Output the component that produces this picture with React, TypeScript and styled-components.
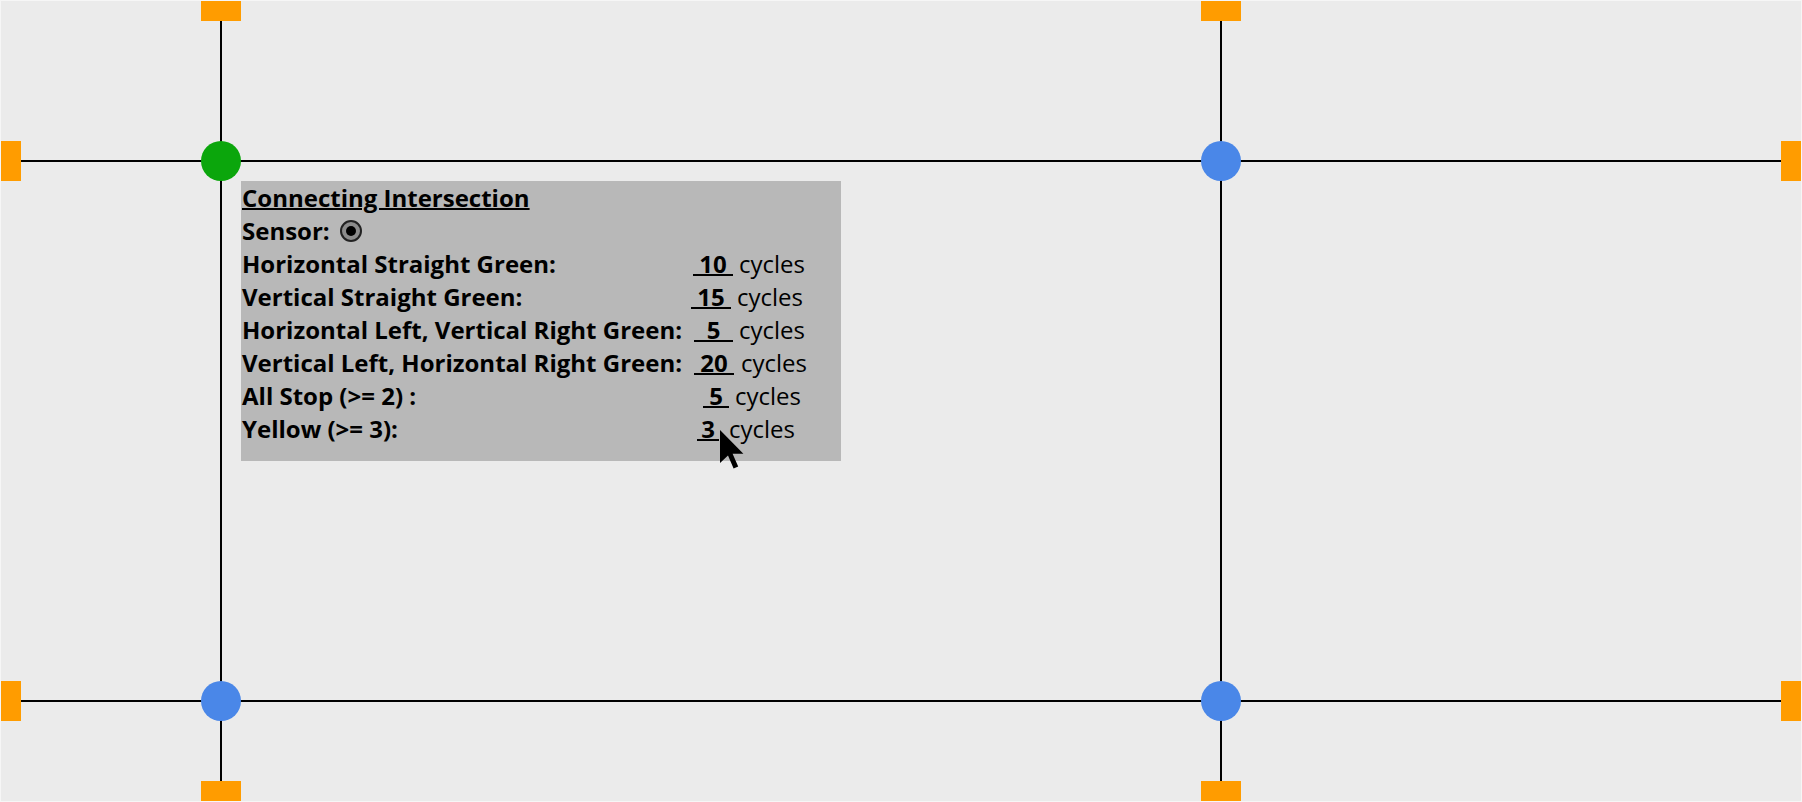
import React from "react";
import styled, { createGlobalStyle } from "styled-components";

const GlobalStyle = createGlobalStyle`
  html, body {
    margin: 0;
    padding: 0;
    background: #ececec;
  }
  body {
    font-family: "Open Sans", "Noto Sans", sans-serif;
    color: #000;
  }
`;

// canvas of the road network
const Board = styled.div`
  position: relative;
  width: 1800px;
  height: 800px;
  border: 1px solid #f6f6f6;
  background: #ebebeb;
  overflow: hidden;
`;

const Roads = styled.svg`
  position: absolute;
  inset: 0;
`;

const Intersection = styled.div<{ $x: number; $y: number; $active?: boolean }>`
  position: absolute;
  left: ${(p) => p.$x - 20}px;
  top: ${(p) => p.$y - 20}px;
  width: 40px;
  height: 40px;
  border-radius: 50%;
  background: ${(p) => (p.$active ? "#0ba60c" : "#4a87e8")};
`;

const Spawn = styled.div<{ $x: number; $y: number; $vertical?: boolean }>`
  position: absolute;
  left: ${(p) => p.$x}px;
  top: ${(p) => p.$y}px;
  width: ${(p) => (p.$vertical ? 20 : 40)}px;
  height: ${(p) => (p.$vertical ? 40 : 20)}px;
  background: #ff9c00;
`;

const InfoPanel = styled.div<{ $x: number; $y: number }>`
  position: absolute;
  left: ${(p) => p.$x}px;
  top: ${(p) => p.$y}px;
  width: 600px;
  height: 280px;
  box-sizing: border-box;
  padding: 0 0 0 1px;
  background: #b8b8b8;
  font-size: 24px;
  line-height: normal;
`;

const Title = styled.div`
  font-weight: 700;
  text-decoration: underline;
  text-decoration-thickness: 2px;
`;

const Row = styled.div`
  display: flex;
  align-items: baseline;
  white-space: nowrap;
`;

const Label = styled.span<{ $fixed?: boolean }>`
  font-weight: 700;
  flex: 0 0 ${(p) => (p.$fixed ? "449px" : "auto")};
`;

const SensorDot = styled.svg`
  align-self: center;
  margin-left: 10px;
`;

const Value = styled.span<{ $offset: number; $width: number }>`
  display: inline-block;
  margin-left: ${(p) => p.$offset}px;
  width: ${(p) => p.$width}px;
  text-align: center;
  font-weight: 700;
  background: linear-gradient(#000, #000) no-repeat 0 27px / 100% 2px;
`;

const Unit = styled.span<{ $gap: number }>`
  margin-left: ${(p) => p.$gap}px;
`;

const Pointer = styled.svg`
  position: absolute;
  left: 478px;
  top: 248px;
`;

type Timing = {
  label: string;
  value: string;
  offset: number;
  width: number;
  gap: number;
};

const timings: Timing[] = [
  { label: "Horizontal Straight Green:", value: "10", offset: 2, width: 40, gap: 6 },
  { label: "Vertical Straight Green:", value: "15", offset: 0, width: 40, gap: 6 },
  { label: "Horizontal Left, Vertical Right Green:", value: "5", offset: 3, width: 39, gap: 6 },
  { label: "Vertical Left, Horizontal Right Green:", value: "20", offset: 3, width: 40, gap: 7 },
  { label: "All Stop (>= 2) :", value: "5", offset: 12, width: 26, gap: 6 },
  { label: "Yellow (>= 3):", value: "3", offset: 6, width: 22, gap: 10 },
];

const COLS = [220, 1220];
const ROWS = [160, 700];

const App = () => {
  return (
    <>
      <GlobalStyle />
      <Board>
        <Roads width={1800} height={800}>
          {ROWS.map((y) => (
            <line key={"h" + y} x1={0} y1={y} x2={1800} y2={y} stroke="#000" strokeWidth={2} />
          ))}
          {COLS.map((x) => (
            <line key={"v" + x} x1={x} y1={0} x2={x} y2={800} stroke="#000" strokeWidth={2} />
          ))}
        </Roads>

        {COLS.map((x) => (
          <React.Fragment key={"s" + x}>
            <Spawn $x={x - 20} $y={0} />
            <Spawn $x={x - 20} $y={780} />
          </React.Fragment>
        ))}
        {ROWS.map((y) => (
          <React.Fragment key={"e" + y}>
            <Spawn $vertical $x={0} $y={y - 20} />
            <Spawn $vertical $x={1780} $y={y - 20} />
          </React.Fragment>
        ))}

        {ROWS.map((y) =>
          COLS.map((x) => (
            <Intersection key={x + "-" + y} $x={x} $y={y} $active={x === 220 && y === 160} />
          ))
        )}

        <InfoPanel $x={240} $y={180}>
          <Title>Connecting Intersection</Title>
          <Row>
            <Label>Sensor:</Label>
            <SensorDot width={22} height={22} viewBox="0 0 22 22">
              <circle cx={11} cy={11} r={10} fill="#8c8c8c" stroke="#222" strokeWidth={2} />
              <circle cx={11} cy={11} r={5} fill="#000" />
            </SensorDot>
          </Row>
          {timings.map((t) => (
            <Row key={t.label}>
              <Label $fixed>{t.label}</Label>
              <Value $offset={t.offset} $width={t.width}>
                {t.value}
              </Value>
              <Unit $gap={t.gap}>cycles</Unit>
            </Row>
          ))}
          <Pointer width={26} height={42} viewBox="0 0 13 21">
            <path d="M0.5 0.5 L0.5 17 L4.5 13.2 L7.3 19.8 L9.6 18.8 L6.8 12.4 L12.2 12.4 Z" fill="#000" />
          </Pointer>
        </InfoPanel>
      </Board>
    </>
  );
};

export default App;
